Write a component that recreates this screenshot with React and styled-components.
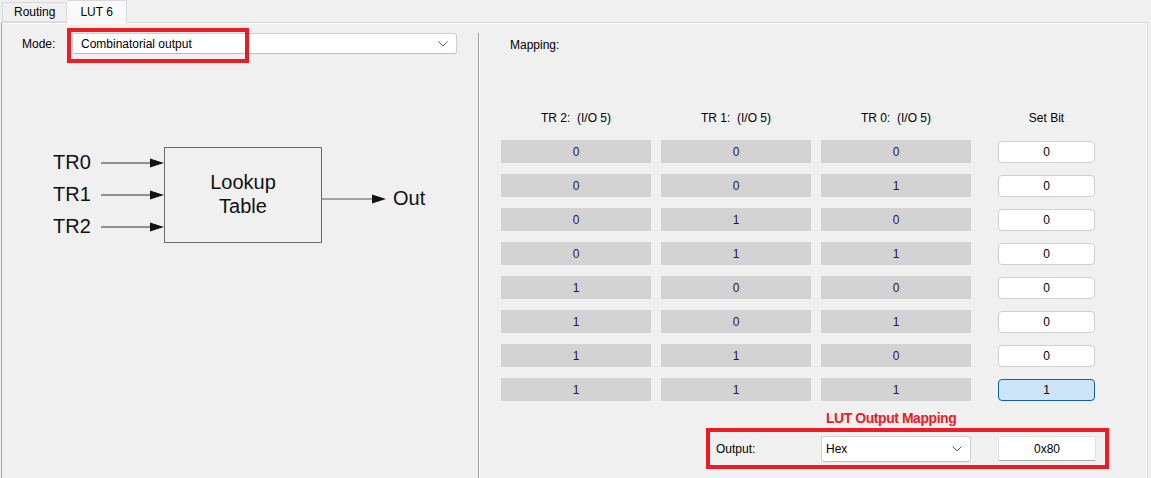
import styled, { createGlobalStyle } from "styled-components";

const GlobalStyle = createGlobalStyle`
    html, body {
        margin: 0;
        padding: 0;
        background: #f0f0f0;
        overflow: hidden;
    }
    body {
        font-family: "Liberation Sans", Arial, sans-serif;
        font-size: 12px;
        color: #000;
    }
`

const rows = [0, 1, 2, 3, 4, 5, 6, 7].map((n) => ({
    tr2: (n >> 2) & 1,
    tr1: (n >> 1) & 1,
    tr0: n & 1,
    bit: n === 7 ? 1 : 0,
}));

const Chevron = () => (
    <svg width="10" height="6" viewBox="0 0 10 6">
        <path d="M0.5 0.5 L5 5 L9.5 0.5" fill="none" stroke="#606060" strokeWidth="1" />
    </svg>
);

// block diagram drawn as svg, origin sits at page (46,140)
const Diagram = () => (
    <DiagramSvg width="380" height="110" viewBox="0 0 380 110">
        {[23, 55, 87].map((y) => (
            <g key={y}>
                <line x1="55" y1={y} x2="104" y2={y} stroke="#333" strokeWidth="1" />
                <polygon points={`104,${y - 4.5} 118,${y} 104,${y + 4.5}`} fill="#111" />
            </g>
        ))}
        <text x="7" y="29" fontSize="20">TR0</text>
        <text x="7" y="61" fontSize="20">TR1</text>
        <text x="7" y="93" fontSize="20">TR2</text>
        <rect x="118.5" y="7.5" width="157" height="95" fill="none" stroke="#6a6a6a" strokeWidth="1" />
        <text x="197" y="49" fontSize="20" textAnchor="middle">Lookup</text>
        <text x="197" y="73" fontSize="20" textAnchor="middle">Table</text>
        <line x1="276" y1="59" x2="327" y2="59" stroke="#8a8a8a" strokeWidth="1.5" />
        <polygon points={`326,54.5 340,59 326,63.5`} fill="#111" />
        <text x="347" y="65" fontSize="20">Out</text>
    </DiagramSvg>
);

const App = () => {
    return (
        <Screen>
            <GlobalStyle />
            <TabStrip>
                <Tab>Routing</Tab>
                <Tab active>LUT 6</Tab>
            </TabStrip>
            <TabPage>
                <LeftPanel>
                    <ModeRow>
                        <Label>Mode:</Label>
                        <SelectWrap>
                            <Select width={385}>
                                <span>Combinatorial output</span>
                                <Chevron />
                            </Select>
                            <Highlight />
                        </SelectWrap>
                    </ModeRow>
                    <Diagram />
                </LeftPanel>
                <Divider />
                <RightPanel>
                    <MappingLabel>Mapping:</MappingLabel>
                    <MapGrid>
                        <Header>TR 2:&nbsp;&nbsp;(I/O 5)</Header>
                        <Header>TR 1:&nbsp;&nbsp;(I/O 5)</Header>
                        <Header>TR 0:&nbsp;&nbsp;(I/O 5)</Header>
                        <Header setBit>Set Bit</Header>
                        {rows.map((r, i) => [
                            <Cell key={`a${i}`}>{r.tr2}</Cell>,
                            <Cell key={`b${i}`}>{r.tr1}</Cell>,
                            <Cell key={`c${i}`}>{r.tr0}</Cell>,
                            <BitBox key={`d${i}`} selected={r.bit === 1}>{r.bit}</BitBox>,
                        ])}
                    </MapGrid>
                    <OutputTitle>LUT Output Mapping</OutputTitle>
                    <OutputRow>
                        <OutputLabel>Output:</OutputLabel>
                        <Select width={150} small>
                            <span>Hex</span>
                            <Chevron />
                        </Select>
                        <ValueBox>0x80</ValueBox>
                    </OutputRow>
                </RightPanel>
            </TabPage>
        </Screen>
    )
}

const Screen = styled.div`
    width: 1151px;
    height: 478px;
    display: flex;
    flex-direction: column;
    background: #f0f0f0;
    overflow: hidden;
`

const TabStrip = styled.div`
    height: 22px;
    display: flex;
    align-items: flex-end;
    padding-left: 2px;
    position: relative;
    z-index: 1;
`

const Tab = styled.div`
    box-sizing: border-box;
    height: ${(p) => (p.active ? "23px" : "20px")};
    margin-bottom: ${(p) => (p.active ? "-1px" : "0")};
    padding: 0 ${(p) => (p.active ? "13px" : "11px")};
    display: flex;
    align-items: center;
    border: 1px solid #d9d9d9;
    border-bottom: ${(p) => (p.active ? "none" : "1px solid #d9d9d9")};
    border-left: ${(p) => (p.active ? "none" : "1px solid #d9d9d9")};
    background: ${(p) => (p.active ? "#f9f9f9" : "#f0f0f0")};
    color: #000;
`

const TabPage = styled.div`
    flex: 1;
    display: flex;
    margin-left: 1px;
    margin-right: 3px;
    border: 1px solid #d9d9d9;
    border-bottom: none;
    border-left: 1px solid #9aa6b6;
    box-shadow: inset -1px 1px 0 #fafafa;
`

const LeftPanel = styled.div`
    width: 476px;
    display: flex;
    flex-direction: column;
    padding-top: 10px;
`

const ModeRow = styled.div`
    display: flex;
    align-items: center;
    height: 21px;
    padding-left: 20px;
`

const Label = styled.span`
    width: 50px;
`

const SelectWrap = styled.div`
    position: relative;
`

const Select = styled.div`
    box-sizing: border-box;
    width: ${(p) => p.width}px;
    height: ${(p) => (p.small ? "26px" : "21px")};
    display: flex;
    align-items: center;
    justify-content: space-between;
    padding: 0 8px 0 ${(p) => (p.small ? "4px" : "8px")};
    background: #fff;
    border: 1px solid #d0d0d0;
    border-bottom-color: #bdbdbd;
    border-radius: 3px;
`

const Highlight = styled.div`
    position: absolute;
    left: -5px;
    top: -5px;
    width: 182px;
    height: 35px;
    box-sizing: border-box;
    border: 4px solid #ec1c24;
`

const DiagramSvg = styled.svg`
    margin: 86px 0 0 44px;
    font-family: "Liberation Sans", Arial, sans-serif;
    fill: #111;
`

const Divider = styled.div`
    width: 1px;
    margin-top: 10px;
    background: #a0a0a0;
    border-right: 1px solid #fbfbfb;
`

const RightPanel = styled.div`
    flex: 1;
    display: flex;
    flex-direction: column;
    padding-left: 21px;
    padding-top: 15px;
`

const MappingLabel = styled.div`
    margin-left: 9px;
    line-height: 14px;
`

const MapGrid = styled.div`
    margin-top: 54px;
    display: grid;
    grid-template-columns: repeat(3, 150px) 114px;
    grid-auto-rows: 23px;
    column-gap: 10px;
    row-gap: 11px;
`

const Header = styled.div`
    display: flex;
    align-items: center;
    justify-content: center;
    justify-self: ${(p) => (p.setBit ? "end" : "stretch")};
    width: ${(p) => (p.setBit ? "97px" : "auto")};
`

const Cell = styled.div`
    background: #d3d3d3;
    display: flex;
    align-items: center;
    justify-content: center;
    color: #2a1450;
`

const BitBox = styled.div`
    box-sizing: border-box;
    justify-self: end;
    align-self: center;
    width: 97px;
    height: 22px;
    display: flex;
    align-items: center;
    justify-content: center;
    background: ${(p) => (p.selected ? "#cce4f7" : "#fff")};
    border: 1px solid ${(p) => (p.selected ? "#1062a8" : "#cfcfcf")};
    border-radius: 4px;
`

const OutputTitle = styled.div`
    margin: 9px 0 0 325px;
    line-height: 17px;
    font-weight: bold;
    font-size: 14px;
    letter-spacing: -0.45px;
    color: #ec1c24;
`

const OutputRow = styled.div`
    box-sizing: border-box;
    margin: 1px 0 0 205px;
    width: 403px;
    height: 41px;
    display: flex;
    align-items: center;
    padding: 0 9px 0 6px;
    border: 4px solid #ec1c24;
`

const OutputLabel = styled.span`
    width: 105px;
`

const ValueBox = styled.div`
    box-sizing: border-box;
    margin-left: 27px;
    width: 98px;
    height: 25px;
    display: flex;
    align-items: center;
    justify-content: center;
    background: #fff;
    border: 1px solid #e2e2e2;
    border-bottom: 1px solid #a8a8a8;
    border-radius: 2px;
`

export default App;
